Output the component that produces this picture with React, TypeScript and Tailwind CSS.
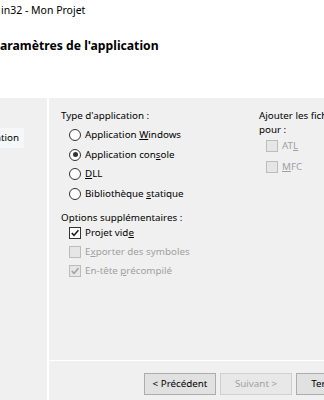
import React from "react";

const font = "font-['Noto_Sans',sans-serif]";

function Radio({ checked, label }: { checked?: boolean; label: React.ReactNode }) {
  return (
    <div className="flex items-center h-[19.5px] pl-[8px]">
      <span className="w-[12px] h-[12px] rounded-full border border-[#333333] bg-white flex items-center justify-center shrink-0">
        {checked && <span className="w-[5px] h-[5px] rounded-full bg-[#333333]" />}
      </span>
      <span className="ml-[4px] text-[9.8px] leading-[14px] text-black">{label}</span>
    </div>
  );
}

function Check({ checked, disabled, label, tall }: { checked?: boolean; disabled?: boolean; label: React.ReactNode; tall?: boolean }) {
  return (
    <div className={tall ? "flex items-center h-[21px] pl-[7px]" : "flex items-center h-[19px] pl-[8px]"}>
      <span
        className={
          disabled
            ? "w-[12px] h-[12px] border border-[#bcbcbc] bg-[#e6e6e6] flex items-center justify-center shrink-0"
            : "w-[12px] h-[12px] border border-[#333333] bg-white flex items-center justify-center shrink-0"
        }
      >
        {checked && (
          <svg width="10" height="10" viewBox="0 0 10 10">
            <path d="M1.8 5 L4 7.4 L8.4 2.2" fill="none" stroke={disabled ? "#a0a0a0" : "#1a1a1a"} strokeWidth="1.6" />
          </svg>
        )}
      </span>
      <span className={disabled ? "ml-[4px] text-[9.8px] leading-[14px] text-[#a0a0a0]" : "ml-[4px] text-[9.8px] leading-[14px] text-black"}>
        {label}
      </span>
    </div>
  );
}

export default function App() {
  return (
    <div className={`w-[324px] h-[400px] bg-white flex flex-col overflow-hidden ${font}`}>
      <div className="h-[98px] shrink-0 flex flex-col">
        <div className="pt-[3px] pl-[1px] text-[10.5px] leading-[14px] text-black whitespace-nowrap">in32 - Mon Projet</div>
        <div className="mt-[21px] text-[12.2px] leading-[16px] font-bold text-black whitespace-nowrap">aramètres de l'application</div>
      </div>
      <div className="flex-1 flex min-h-0">
        <div className="w-[47px] bg-[#f0f0f0] shrink-0 pt-[30px]">
          <div className="w-[24px] h-[20px] bg-[#f6f7f9] flex items-center justify-end pr-[5px] text-[9.8px] text-black overflow-hidden whitespace-nowrap">
            ation
          </div>
        </div>
        <div className="w-[2px] bg-white shrink-0" />
        <div className="flex-1 bg-[#f0f0f0] flex flex-col">
          <div className="h-[262px] flex pl-[12px] pt-[10px]">
            <div className="w-[198px] flex flex-col">
              <div className="text-[9.8px] leading-[16px] text-black">Type d'application :</div>
              <div className="mt-[1.5px] flex flex-col">
                <Radio label={<>Application <u>W</u>indows</>} />
                <Radio checked label={<>Application con<u>s</u>ole</>} />
                <Radio label={<><u>D</u>LL</>} />
                <Radio label={<>Bibliothèque <u>s</u>tatique</>} />
              </div>
              <div className="mt-[6px] text-[9.8px] leading-[16px] text-black">Options supplémentaires :</div>
              <div className="mt-[-2px] flex flex-col">
                <Check checked label={<>Projet vid<u>e</u></>} />
                <Check disabled label={<>E<u>x</u>porter des symboles</>} />
                <Check checked disabled label={<>En-tête <u>p</u>récompilé</>} />
              </div>
            </div>
            <div className="flex-1 flex flex-col whitespace-nowrap">
              <div className="text-[9.8px] leading-[14px] text-black pt-[1px]">Ajouter les fichiers d'en-tête communs<br />pour :</div>
              <div className="mt-[-1.5px] flex flex-col">
                <Check tall disabled label={<>AT<u>L</u></>} />
                <Check tall disabled label={<><u>M</u>FC</>} />
              </div>
            </div>
          </div>
          <div className="h-px bg-white" />
          <div className="flex gap-[4px] pl-[95px] pt-[12px]">
            <div className="w-[72px] h-[22px] shrink-0 border border-[#adadad] bg-[#e1e1e1] flex items-center justify-center text-[9.8px] text-black">
              &lt; Précédent
            </div>
            <div className="w-[72px] h-[22px] shrink-0 border border-[#d0d0d0] bg-[#e8e8e8] flex items-center justify-center text-[9.8px] text-[#a0a0a0]">
              Suivant &gt;
            </div>
            <div className="w-[72px] h-[22px] shrink-0 border border-[#adadad] bg-[#e1e1e1] flex items-center justify-center text-[9.8px] text-black">
              Terminer
            </div>
          </div>
        </div>
      </div>
    </div>
  );
}
